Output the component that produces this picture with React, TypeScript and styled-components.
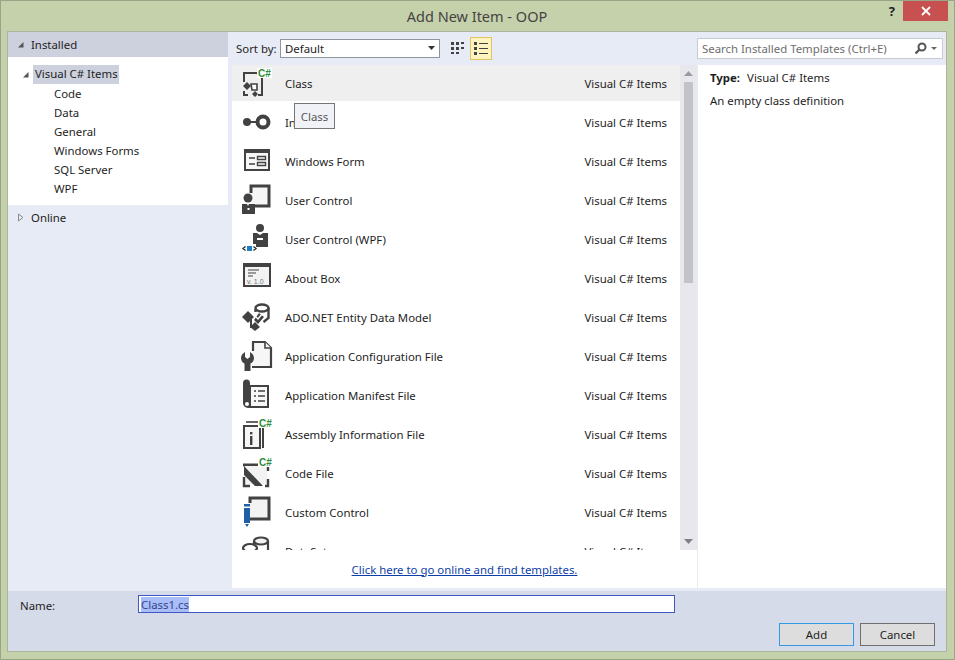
import { ReactNode } from "react";
import styled, { createGlobalStyle } from "styled-components";

const INK = "#424242";

const GlobalStyle = createGlobalStyle`
  html, body { margin: 0; padding: 0; background: #c5d1aa; }
  body { font-family: "Noto Sans", "Open Sans", sans-serif; font-size: 11.4px; color: #1e1e1e; }
`;

const Window = styled.div`
  width: 955px;
  height: 660px;
  box-sizing: border-box;
  border: 1px solid #97a686;
  background: #c5d1aa;
  padding: 0 7px 7px 6px;
  display: flex;
  flex-direction: column;
  overflow: hidden;
`;

const TitleBar = styled.div`
  height: 30px;
  flex: none;
  position: relative;
  display: flex;
  align-items: center;
  justify-content: center;
  font-size: 14.5px;
  color: #444;
  padding-bottom: 1px;
  box-sizing: border-box;
`;

const HelpMark = styled.span`
  position: absolute;
  right: 52px;
  top: 1px;
  font-weight: 700;
  font-size: 13px;
  color: #222;
`;

const CloseButton = styled.div`
  position: absolute;
  right: -1px;
  top: 0;
  width: 45px;
  height: 20px;
  background: #c75050;
  display: flex;
  align-items: center;
  justify-content: center;
`;

const Body = styled.div`
  flex: 1;
  display: flex;
  flex-direction: column;
  border: 1px solid #a9b69c;
  background: #e6ebf5;
  min-height: 0;
`;

const Main = styled.div`
  flex: 1;
  display: flex;
  min-height: 0;
`;

const LeftPane = styled.div`
  width: 220px;
  flex: none;
  display: flex;
  flex-direction: column;
  margin-right: 4px;
`;

const PaneHeader = styled.div`
  height: 25px;
  background: #cdd1de;
  display: flex;
  align-items: center;
  padding-left: 8px;
  gap: 6px;
`;

const Tree = styled.div`
  background: #fff;
  height: 148px;
  box-sizing: border-box;
  padding-top: 8px;
  display: flex;
  flex-direction: column;
`;

const TreeRoot = styled.div`
  display: flex;
  align-items: center;
  padding-left: 13px;
  gap: 3px;
  height: 19px;
`;

const SelectedLabel = styled.span`
  background: #cdd1de;
  height: 19px;
  line-height: 18px;
  padding: 0 1px 0 2px;
`;

const TreeChild = styled.div`
  height: 19px;
  line-height: 19px;
  padding-left: 46px;
`;

const OnlineRow = styled.div`
  height: 25px;
  display: flex;
  align-items: center;
  padding-left: 8px;
  gap: 6px;
`;

const Center = styled.div`
  flex: 1;
  display: flex;
  flex-direction: column;
  min-width: 0;
`;

const Toolbar = styled.div`
  height: 33px;
  flex: none;
  display: flex;
  align-items: center;
  padding: 0 3px 1px 4px;
  box-sizing: border-box;
`;

const SortLabel = styled.span`
  width: 44px;
  flex: none;
`;

const SortSelect = styled.div`
  width: 160px;
  height: 19px;
  box-sizing: border-box;
  border: 1px solid #8f949e;
  background: #fff;
  display: flex;
  align-items: center;
  justify-content: space-between;
  padding: 0 4px 0 4px;
  margin-right: 6px;
`;

const ViewToggle = styled.div<{ $active?: boolean }>`
  width: 22px;
  height: 23px;
  box-sizing: border-box;
  margin-right: 2px;
  display: flex;
  align-items: center;
  justify-content: center;
  background: ${(p) => (p.$active ? "#fdf4bf" : "transparent")};
  border: 1px solid ${(p) => (p.$active ? "#e5c365" : "transparent")};
`;

const SearchBox = styled.div`
  margin-left: auto;
  width: 246px;
  height: 21px;
  box-sizing: border-box;
  border: 1px solid #c6cad3;
  background: #fff;
  color: #6d6d6d;
  display: flex;
  align-items: center;
  justify-content: space-between;
  padding: 0 5px 0 4px;
`;

const SearchIcons = styled.div`
  display: flex;
  align-items: center;
  gap: 4px;
`;

const Content = styled.div`
  flex: 1;
  display: flex;
  min-height: 0;
`;

const ListColumn = styled.div`
  width: 465px;
  flex: none;
  background: #fff;
  border-right: 1px solid #e6ebf5;
  display: flex;
  flex-direction: column;
  position: relative;
`;

const ListArea = styled.div`
  height: 485px;
  flex: none;
  display: flex;
  overflow: hidden;
`;

const Rows = styled.div`
  flex: 1;
  overflow: hidden;
`;

const Row = styled.div<{ $hover?: boolean }>`
  height: 36px;
  margin-bottom: 3px;
  display: flex;
  align-items: center;
  padding: 0 13px 0 9px;
  background: ${(p) => (p.$hover ? "#efefef" : "transparent")};
`;

const RowIcon = styled.div`
  width: 44px;
  flex: none;
  display: flex;
  align-items: center;
`;

const RowName = styled.span`
  flex: 1;
  color: #1e1e1e;
`;

const RowKind = styled.span`
  color: #1e1e1e;
`;

const Scrollbar = styled.div`
  width: 17px;
  flex: none;
  background: #e8e8ec;
  display: flex;
  flex-direction: column;
  align-items: center;
`;

const ScrollArrow = styled.div`
  height: 17px;
  flex: none;
  display: flex;
  align-items: center;
  justify-content: center;
`;

const ScrollThumb = styled.div`
  width: 9px;
  height: 201px;
  flex: none;
  background: #c2c3c9;
`;

const ScrollSpacer = styled.div`
  flex: 1;
`;

const OnlineLink = styled.div`
  flex: 1;
  display: flex;
  justify-content: center;
  align-items: center;
  color: #0e3fa8;
  text-decoration: underline;
`;

const Tooltip = styled.div`
  position: absolute;
  left: 62px;
  top: 38px;
  width: 41px;
  height: 26px;
  box-sizing: border-box;
  border: 1px solid #767676;
  background: #f1f2f7;
  color: #575757;
  display: flex;
  align-items: center;
  justify-content: center;
`;

const Details = styled.div`
  flex: 1;
  background: #fff;
  padding: 4px 12px;
`;

const DetailLine = styled.div`
  height: 23px;
  line-height: 18px;
`;

const DetailKey = styled.b`
  font-weight: 700;
  margin-right: 7px;
`;

const NameBar = styled.div`
  height: 60px;
  flex: none;
  margin-top: 3px;
  background: #d6dbe9;
  display: flex;
  flex-direction: column;
  box-sizing: border-box;
  padding: 4px 11px 5px 12px;
`;

const NameRow = styled.div`
  display: flex;
  align-items: center;
`;

const NameLabel = styled.span`
  width: 118px;
  flex: none;
  padding-top: 3px;
`;

const NameInput = styled.div`
  width: 537px;
  height: 18px;
  box-sizing: border-box;
  border: 1px solid #3f56c4;
  background: #fff;
  display: flex;
  align-items: center;
  padding-left: 2px;
`;

const SelectedText = styled.span`
  background: #a9bdf7;
  color: #33438f;
  line-height: 15px;
`;

const ButtonRow = styled.div`
  margin-top: auto;
  display: flex;
  justify-content: flex-end;
  gap: 6px;
`;

const DialogButton = styled.div<{ $primary?: boolean }>`
  width: 75px;
  height: 23px;
  box-sizing: border-box;
  background: #dddddd;
  border: 1px solid ${(p) => (p.$primary ? "#3399e6" : "#707070")};
  display: flex;
  align-items: center;
  justify-content: center;
`;

function Triangle({ open, color = "#555" }: { open?: boolean; color?: string }) {
  return (
    <svg width="9" height="9" viewBox="0 0 9 9">
      {open ? <path d="M7.500 2V7.500H2z" fill={color} /> : <path d="M2.500 1L7 4.500 2.500 8z" fill="none" stroke="#8a8a8a" />}
    </svg>
  );
}

function CSharp({ x = 17, y = 1 }: { x?: number; y?: number }) {
  return (
    <>
      <rect x={x - 1} y={y} width="15" height="10" fill="#fff" />
      <text x={x} y={y + 8.5} fontFamily="'Liberation Sans', sans-serif" fontWeight="700" fontSize="10" fill="#2f8a3a">C#</text>
    </>
  );
}

const icons: Record<string, ReactNode> = {
  cls: (
    <>
      <path d="M3 15V6h13l5 5v17h-4" fill="none" stroke={INK} strokeWidth="2" />
      <path d="M3 24v4h4" fill="none" stroke={INK} strokeWidth="2" />
      <path d="M2 19l4-4 4 4-4 4zM11 27l3-3 3 3-3 3z" fill={INK} />
      <path d="M10 17h6v6h-5z" fill="#fff" stroke={INK} strokeWidth="1.600" />
      <CSharp />
    </>
  ),
  iface: (
    <>
      <circle cx="6" cy="16" r="4" fill={INK} />
      <rect x="8" y="15" width="10" height="2" fill={INK} />
      <circle cx="22" cy="16" r="5.500" fill="none" stroke={INK} strokeWidth="4" />
    </>
  ),
  form: (
    <>
      <rect x="4" y="5" width="24" height="20" fill="#f6f6f6" stroke={INK} strokeWidth="2" />
      <rect x="4" y="5" width="24" height="3" fill={INK} />
      <path d="M8 13h6M8 19h6" stroke={INK} strokeWidth="1.600" />
      <path d="M16.500 11.500h8v3h-8zM16.500 17.500h8v3h-8z" fill="none" stroke={INK} strokeWidth="1.400" />
    </>
  ),
  user: (
    <>
      <path d="M10 9V2h18v20H14" fill="#f6f6f6" stroke={INK} strokeWidth="3" />
      <circle cx="7" cy="14" r="4.500" fill={INK} />
      <path d="M1 20h5l1 2 1-2h6v10H1z" fill={INK} />
      <rect x="6.500" y="24" width="2" height="2" fill="#fff" />
    </>
  ),
  wpf: (
    <>
      <circle cx="19" cy="5" r="4" fill={INK} />
      <path d="M12 10h4l3 2 3-2h5v14H12z" fill={INK} />
      <rect x="16" y="15" width="6" height="2" fill="#fff" />
      <rect x="3" y="21" width="12" height="8" fill="#fff" />
      <rect x="6" y="23" width="5" height="5" fill="#1a80c8" />
      <path d="M4.500 23.500L2 25.500l2.500 2M12.500 23.500l2.500 2-2.500 2" fill="none" stroke="#222" strokeWidth="1.300" />
    </>
  ),
  about: (
    <>
      <rect x="3" y="2" width="26" height="22" fill="#f3f3f3" stroke={INK} strokeWidth="2" />
      <rect x="3" y="2" width="26" height="3" fill={INK} />
      <path d="M7 8h11M7 11h8M7 14h5" stroke={INK} strokeWidth="1.200" />
      <text x="6" y="22" fontFamily="'Liberation Sans', sans-serif" fontSize="7" fill="#777">v. 1.0</text>
    </>
  ),
  ado: (
    <>
      <ellipse cx="21" cy="7" rx="6.500" ry="3.500" fill="none" stroke={INK} strokeWidth="2.400" />
      <path d="M27.500 7v10l-5 4M14.500 8v3" fill="none" stroke={INK} strokeWidth="2.400" />
      <path d="M1 16l6-6 6 6-6 6z" fill={INK} />
      <path d="M13 19l5-7 5 4-6 7zM9 26l5-5 5 5-5 4z" fill={INK} />
      <path d="M10 17v9h5" fill="none" stroke={INK} strokeWidth="2" />
      <path d="M14 15l3 3 4-5" fill="none" stroke="#fff" strokeWidth="1.400" />
    </>
  ),
  config: (
    <>
      <path d="M12 11V2h12l6 6v19H11" fill="#f6f6f6" stroke={INK} strokeWidth="2.200" />
      <path d="M24 2v6h6" fill="#f6f6f6" stroke={INK} strokeWidth="1.600" />
      <path d="M4 12v5l2.500 2 2.500-2v-5c2.300 1.300 4 3.600 4 6 0 2.600-1.500 4.600-3.500 5.600V31h-6v-7.400C1.500 22.600 0 20.600 0 18c0-2.400 1.700-4.700 4-6z" fill={INK} />
    </>
  ),
  manifest: (
    <>
      <path d="M2 4a3.500 3.500 0 0 1 7 0v2h19v23H7a5 5 0 0 1-5-5z" fill={INK} />
      <rect x="10" y="8" width="16" height="19" fill="#f6f6f6" />
      <path d="M13 12h2M17 12h7M13 17h2M17 17h7M13 22h2M17 22h7" stroke={INK} strokeWidth="1.600" />
      <circle cx="6" cy="25" r="2" fill="#fff" />
    </>
  ),
  assembly: (
    <>
      <path d="M5 4h13" stroke={INK} strokeWidth="1.600" />
      <path d="M3 30V8h16v22zM22 10v20" fill="#f6f6f6" stroke={INK} strokeWidth="2" />
      <rect x="9" y="14" width="2.400" height="2.400" fill={INK} />
      <rect x="9" y="18" width="2.400" height="9" fill={INK} />
      <CSharp y={0} x={18} />
    </>
  ),
  code: (
    <>
      <path d="M2 8h18" stroke={INK} strokeWidth="3" />
      <path d="M4 9h22v18H4z" fill="#f3f3f3" />
      <path d="M3 9l19 20h-8L3 18z" fill={INK} />
      <path d="M3 20v9h6M27 22v7h-3" fill="none" stroke={INK} strokeWidth="2.400" />
      <path d="M27 10v4" stroke={INK} strokeWidth="2.400" />
      <CSharp y={0} x={18} />
    </>
  ),
  custom: (
    <>
      <path d="M9 7V2h19v21H9" fill="#f3f3f3" stroke={INK} strokeWidth="3" />
      <rect x="3" y="8" width="6" height="2.500" fill="#1f5fa8" />
      <path d="M3 12h6v15H3z" fill="#1f5fa8" />
      <path d="M4 28h4l-2 3z" fill="#1f5fa8" />
    </>
  ),
  dataset: (
    <>
      <ellipse cx="20" cy="6" rx="7" ry="3.500" fill="#f3f3f3" stroke={INK} strokeWidth="2.200" />
      <path d="M13 6v12M27 6v12" stroke={INK} strokeWidth="2.200" />
      <ellipse cx="9" cy="13" rx="7" ry="4" fill="#fff" stroke={INK} strokeWidth="2.200" />
    </>
  ),
};

const rows = [
  { key: "cls", name: "Class" },
  { key: "iface", name: "Interface" },
  { key: "form", name: "Windows Form" },
  { key: "user", name: "User Control" },
  { key: "wpf", name: "User Control (WPF)" },
  { key: "about", name: "About Box" },
  { key: "ado", name: "ADO.NET Entity Data Model" },
  { key: "config", name: "Application Configuration File" },
  { key: "manifest", name: "Application Manifest File" },
  { key: "assembly", name: "Assembly Information File" },
  { key: "code", name: "Code File" },
  { key: "custom", name: "Custom Control" },
  { key: "dataset", name: "DataSet" },
];

const categories = ["Code", "Data", "General", "Windows Forms", "SQL Server", "WPF"];

export default function App() {
  return (
    <Window>
      <GlobalStyle />
      <TitleBar>
        Add New Item - OOP
        <HelpMark>?</HelpMark>
        <CloseButton>
          <svg width="10" height="10" viewBox="0 0 10 10">
            <path d="M1 1l8 8M9 1l-8 8" stroke="#fff" strokeWidth="1.800" />
          </svg>
        </CloseButton>
      </TitleBar>
      <Body>
        <Main>
          <LeftPane>
            <PaneHeader>
              <Triangle open />
              Installed
            </PaneHeader>
            <Tree>
              <TreeRoot>
                <Triangle open />
                <SelectedLabel>Visual C# Items</SelectedLabel>
              </TreeRoot>
              {categories.map((c) => (
                <TreeChild key={c}>{c}</TreeChild>
              ))}
            </Tree>
            <OnlineRow>
              <Triangle />
              Online
            </OnlineRow>
          </LeftPane>
          <Center>
            <Toolbar>
              <SortLabel>Sort by:</SortLabel>
              <SortSelect>
                Default
                <svg width="7" height="4" viewBox="0 0 7 4">
                  <path d="M0 0h7L3.500 4z" fill="#333" />
                </svg>
              </SortSelect>
              <ViewToggle>
                <svg width="14" height="14" viewBox="0 0 14 14" fill={INK}>
                  <path d="M1 1h3v3H1zM6 1h3v3H6zM11 1h3v2h-3zM1 6h3v3H1zM6 6h3v3H6zM11 6h3v2h-3zM1 11h3v2H1zM6 11h3v2H6z" />
                </svg>
              </ViewToggle>
              <ViewToggle $active>
                <svg width="16" height="15" viewBox="0 0 16 15" fill={INK}>
                  <path d="M1 1h3v3H1zM1 6h3v3H1zM1 11h3v3H1zM6 2h9v1H6zM6 7h9v1H6zM6 12h9v1H6z" />
                </svg>
              </ViewToggle>
              <SearchBox>
                Search Installed Templates (Ctrl+E)
                <SearchIcons>
                  <svg width="13" height="13" viewBox="0 0 13 13">
                    <circle cx="8" cy="5" r="3.500" fill="none" stroke="#555" strokeWidth="2" />
                    <path d="M5.500 7.500L1.500 11.500" stroke="#555" strokeWidth="2.400" />
                  </svg>
                  <svg width="6" height="3" viewBox="0 0 6 3">
                    <path d="M0 0h6L3 3z" fill="#666" />
                  </svg>
                </SearchIcons>
              </SearchBox>
            </Toolbar>
            <Content>
              <ListColumn>
                <ListArea>
                  <Rows>
                    {rows.map((r, i) => (
                      <Row key={r.key} $hover={i === 0}>
                        <RowIcon>
                          <svg width="32" height="32" viewBox="0 0 32 32">
                            {icons[r.key]}
                          </svg>
                        </RowIcon>
                        <RowName>{r.name}</RowName>
                        <RowKind>Visual C# Items</RowKind>
                      </Row>
                    ))}
                  </Rows>
                  <Scrollbar>
                    <ScrollArrow>
                      <svg width="9" height="5" viewBox="0 0 9 5">
                        <path d="M0 5L4.500 0 9 5z" fill="#9a9aa2" />
                      </svg>
                    </ScrollArrow>
                    <ScrollThumb />
                    <ScrollSpacer />
                    <ScrollArrow>
                      <svg width="9" height="5" viewBox="0 0 9 5">
                        <path d="M0 0l4.500 5L9 0z" fill="#7f7f88" />
                      </svg>
                    </ScrollArrow>
                  </Scrollbar>
                </ListArea>
                <OnlineLink>Click here to go online and find templates.</OnlineLink>
                <Tooltip>Class</Tooltip>
              </ListColumn>
              <Details>
                <DetailLine>
                  <DetailKey>Type:</DetailKey>Visual C# Items
                </DetailLine>
                <DetailLine>An empty class definition</DetailLine>
              </Details>
            </Content>
          </Center>
        </Main>
        <NameBar>
          <NameRow>
            <NameLabel>Name:</NameLabel>
            <NameInput>
              <SelectedText>Class1.cs</SelectedText>
            </NameInput>
          </NameRow>
          <ButtonRow>
            <DialogButton $primary>Add</DialogButton>
            <DialogButton>Cancel</DialogButton>
          </ButtonRow>
        </NameBar>
      </Body>
    </Window>
  );
}
